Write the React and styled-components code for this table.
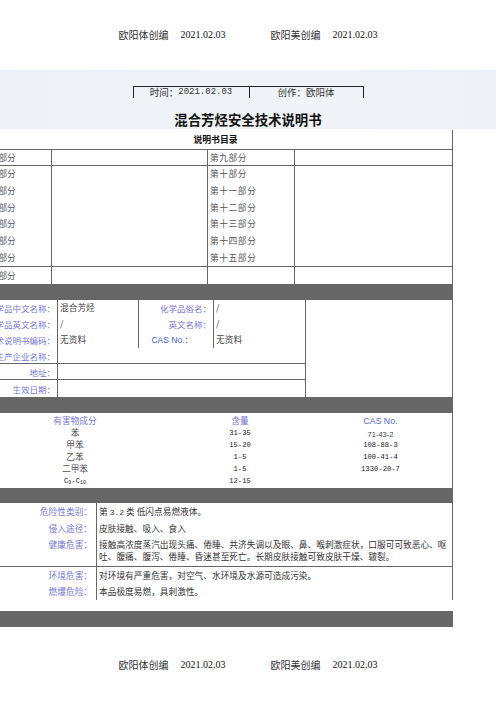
import React from "react";
import styled, { createGlobalStyle } from "styled-components";

const LINE = "#666";
const LABEL = "#7676d6";
const CJK = `"Noto Sans CJK SC", "Liberation Sans", sans-serif`;

const GlobalStyle = createGlobalStyle`
  html, body { margin: 0; padding: 0; background: #fff; }
  body { font-family: ${CJK}; overflow: hidden; }
  * { box-sizing: border-box; }
`;

const Page = styled.div`
  width: 496px;
  height: 702px;
  overflow: hidden;
  background: #fff;
`;

const Note = styled.div`
  height: ${(p) => p.$h}px;
  display: flex;
  align-items: center;
  justify-content: center;
`;
const NoteCn = styled.span`
  font-family: ${CJK};
  font-size: 10px;
  line-height: 12px;
  color: #333;
`;
const NoteDate = styled.span`
  font-family: "Liberation Serif", serif;
  font-size: 10px;
  line-height: 12px;
  color: #111;
  margin-left: 12px;
  margin-right: ${(p) => p.$mr || 0}px;
`;

const Band = styled.div`
  height: 59px;
  background: linear-gradient(90deg, #eef2f6, #f0f3f7 60%, #eef2f6);
  padding-top: 16px;
  display: flex;
  flex-direction: column;
  align-items: center;
`;
const TimeBox = styled.div`
  width: 231px;
  height: 12px;
  display: grid;
  grid-template-columns: 115px 1fr;
  border: 1px solid #222;
  border-bottom: none;
`;
const TimeCell = styled.div`
  display: flex;
  align-items: center;
  justify-content: center;
  font-size: 9.5px;
  line-height: 11px;
  color: #333;
  & + & {
    border-left: 1px solid #222;
  }
`;
const Mono = styled.span`
  font-family: "Liberation Mono", monospace;
  font-size: ${(p) => p.$fs || 9}px;
`;
const Title = styled.h1`
  margin: 13px 0 0;
  font-family: ${CJK};
  font-size: 13.4px;
  line-height: 16px;
  font-weight: 700;
  color: #111;
`;

const Doc = styled.div`
  margin-left: -21px;
  width: 474px;
  margin-top: 1px;
`;

const TocHead = styled.div`
  height: 20px;
  border-right: 1px solid ${LINE};
  border-bottom: 1px solid ${LINE};
  display: flex;
  align-items: center;
  justify-content: center;
  font-weight: 700;
  font-size: 8.8px;
  color: #111;
`;
const TocRow = styled.div`
  display: grid;
  grid-template-columns: 73px 156px 87px 158px;
  height: ${(p) => p.$h}px;
  border-bottom: ${(p) => (p.$last ? "none" : `1px solid ${LINE}`)};
`;
const TocCell = styled.div`
  border-right: 1px solid ${LINE};
  padding-left: 2px;
  font-size: 8.7px;
  line-height: ${(p) => p.$lh || 16.8}px;
  color: #555;
  letter-spacing: ${(p) => p.$ls || 0}px;
  white-space: nowrap;
  overflow: hidden;
`;

const Bar = styled.div`
  height: ${(p) => p.$h}px;
  background: #666;
`;

const Info = styled.div`
  display: grid;
  grid-template-columns: 326px 148px;
  height: 97px;
`;
const InfoLeft = styled.div`
  display: flex;
  flex-direction: column;
`;
const InfoRight = styled.div`
  border-left: 1px solid ${LINE};
  border-right: 1px solid ${LINE};
`;
const InfoGrid = styled.div`
  display: grid;
  grid-template-columns: 79px 81px 75px 91px;
  grid-auto-rows: 16px;
`;
const InfoLine = styled.div`
  display: grid;
  grid-template-columns: 79px 1fr;
  height: ${(p) => p.$h}px;
  border-bottom: ${(p) => (p.$bb ? `1px solid ${LINE}` : "none")};
`;
const Label = styled.div`
  display: flex;
  align-items: center;
  justify-content: flex-end;
  padding-right: ${(p) => p.$pr ?? 2}px;
  white-space: nowrap;
  overflow: hidden;
  font-size: 8.5px;
  line-height: 12px;
  color: ${(p) => (p.$latin ? "#3d5fcc" : LABEL)};
  font-family: ${(p) => (p.$latin ? `"Liberation Sans", ${CJK}` : CJK)};
  border-right: ${(p) => (p.$br ? `1px solid ${LINE}` : "none")};
`;
const Value = styled.div`
  display: flex;
  align-items: center;
  padding-left: 2px;
  white-space: nowrap;
  font-size: 8.7px;
  line-height: 12px;
  color: #444;
  border-right: ${(p) => (p.$br ? `1px solid ${LINE}` : "none")};
`;

const Ingr = styled.div`
  height: 75px;
  border-right: 1px solid ${LINE};
  padding-top: 2px;
  display: grid;
  grid-template-columns: 192px 138px 143px;
  grid-auto-rows: 12px;
`;
const ICell = styled.div`
  text-align: center;
  line-height: 12px;
  white-space: nowrap;
  font-size: ${(p) => (p.$num ? 7.2 : p.$small ? 7.5 : 8.7)}px;
  font-family: ${(p) =>
    p.$num ? `"Liberation Mono", monospace` : p.$latin ? `"Liberation Sans", ${CJK}` : CJK};
  color: ${(p) =>
    p.$head ? (p.$latin ? "#4a68cc" : LABEL) : p.$num ? "#222" : p.$small ? "#444" : "#555"};
  padding-top: ${(p) => p.$pt || 0}px;
  sub {
    font-size: 5px;
    vertical-align: -1px;
  }
`;

const Hazard = styled.div`
  height: 108px;
`;
const HazBlock = styled.div`
  border-right: 1px solid ${LINE};
  border-bottom: ${(p) => (p.$bb ? `1px solid ${LINE}` : "none")};
`;
const HazRow = styled.div`
  display: grid;
  grid-template-columns: 118px 1fr;
`;
const HazLabel = styled.div`
  border-right: 1px solid ${LINE};
  text-align: right;
  padding: ${(p) => p.$pt || 2}px 4px ${(p) => p.$pb || 2}px 0;
  line-height: 12px;
  font-size: 8.7px;
  color: ${LABEL};
  white-space: nowrap;
`;
const HazValue = styled.div`
  padding: ${(p) => p.$pt || 2}px 0 ${(p) => p.$pb || 2}px 2px;
  line-height: 12px;
  font-size: 8.7px;
  color: #333;
`;

const toc = [
  { h: 16, lh: 15, a: ["第一部分"], c: ["第九部分"] },
  {
    h: 101,
    lh: 16.8,
    a: ["第二部分", "第三部分", "第四部分", "第五部分", "第六部分", "第七部分"],
    c: ["第十部分", "第十一部分", "第十二部分", "第十三部分", "第十四部分", "第十五部分"],
  },
  { h: 17, lh: 17, a: ["第八部分"], c: [], last: true },
];

const ingredients = [
  ["苯", "31-35", "71-43-2"],
  ["甲苯", "15-20", "108-88-3"],
  ["乙苯", "1-5", "100-41-4"],
  ["二甲苯", "1-5", "1330-20-7"],
];

function Lines({ items }) {
  return items.map((t, i) => <div key={i}>{t}</div>);
}

function Credit({ h }) {
  return (
    <Note $h={h}>
      <NoteCn>欧阳体创编</NoteCn>
      <NoteDate $mr={45}>2021.02.03</NoteDate>
      <NoteCn>欧阳美创编</NoteCn>
      <NoteDate>2021.02.03</NoteDate>
    </Note>
  );
}

export default function App() {
  return (
    <Page>
      <GlobalStyle />
      <Credit h={70} />
      <Band>
        <TimeBox>
          <TimeCell>
            时间：<Mono>2021.02.03</Mono>
          </TimeCell>
          <TimeCell>创作：欧阳体</TimeCell>
        </TimeBox>
        <Title>混合芳烃安全技术说明书</Title>
      </Band>
      <Doc>
        <TocHead>说明书目录</TocHead>
        {toc.map((r, i) => (
          <TocRow key={i} $h={r.h} $last={r.last}>
            <TocCell $lh={r.lh}>
              <Lines items={r.a} />
            </TocCell>
            <TocCell $lh={r.lh} />
            <TocCell $lh={r.lh} $ls={0.6}>
              <Lines items={r.c} />
            </TocCell>
            <TocCell $lh={r.lh} />
          </TocRow>
        ))}
        <Bar $h={16} />
        <Info>
          <InfoLeft>
            <InfoGrid>
              <Label $br>化学品中文名称：</Label>
              <Value $br>混合芳烃</Value>
              <Label $br>化学品俗名：</Label>
              <Value>/</Value>
              <Label $br>化学品英文名称：</Label>
              <Value $br>/</Value>
              <Label $br>英文名称：</Label>
              <Value>/</Value>
              <Label $br>技术说明书编码：</Label>
              <Value $br>无资料</Value>
              <Label $br $latin $pr={20}>
                CAS No.：
              </Label>
              <Value>无资料</Value>
            </InfoGrid>
            <InfoLine $h={16} $bb>
              <Label $br>生产企业名称：</Label>
              <Value />
            </InfoLine>
            <InfoLine $h={16} $bb>
              <Label $br>地址：</Label>
              <Value />
            </InfoLine>
            <InfoLine $h={17}>
              <Label $br>生效日期：</Label>
              <Value />
            </InfoLine>
          </InfoLeft>
          <InfoRight />
        </Info>
        <Bar $h={16} />
        <Ingr>
          <ICell $head>有害物成分</ICell>
          <ICell $head>含量</ICell>
          <ICell $head $latin>
            CAS No.
          </ICell>
          {ingredients.map(([n, c, cas], i) => (
            <React.Fragment key={i}>
              <ICell>{n}</ICell>
              <ICell $num>{c}</ICell>
              {i === 0 ? (
                <ICell $latin $small $pt={2}>
                  {cas}
                </ICell>
              ) : (
                <ICell $num>{cas}</ICell>
              )}
            </React.Fragment>
          ))}
          <ICell $num>
            C<sub>9</sub>-C<sub>10</sub>
          </ICell>
          <ICell $num>12-15</ICell>
          <ICell />
        </Ingr>
        <Bar $h={15} />
        <Hazard>
          <HazBlock $bb>
            <HazRow>
              <HazLabel $pt={3}>危险性类别：</HazLabel>
              <HazValue $pt={3}>
                第 <Mono $fs={8}>3.2</Mono> 类 低闪点易燃液体。
              </HazValue>
            </HazRow>
            <HazRow>
              <HazLabel>侵入途径：</HazLabel>
              <HazValue>皮肤接触、吸入、食入</HazValue>
            </HazRow>
            <HazRow>
              <HazLabel $pb={3}>健康危害：</HazLabel>
              <HazValue $pb={3}>
                接触高浓度蒸汽出现头痛、倦睡、共济失调以及眼、鼻、喉刺激症状，口服可可致恶心、呕吐、腹痛、腹泻、倦睡、昏迷甚至死亡。长期皮肤接触可致皮肤干燥、皲裂。
              </HazValue>
            </HazRow>
          </HazBlock>
          <HazBlock>
            <HazRow>
              <HazLabel $pt={3}>环境危害：</HazLabel>
              <HazValue $pt={3}>对环境有严重危害，对空气、水环境及水源可造成污染。</HazValue>
            </HazRow>
            <HazRow>
              <HazLabel>燃爆危险：</HazLabel>
              <HazValue>本品极度易燃，具刺激性。</HazValue>
            </HazRow>
          </HazBlock>
        </Hazard>
        <Bar $h={16} />
      </Doc>
      <Credit h={75} />
    </Page>
  );
}
